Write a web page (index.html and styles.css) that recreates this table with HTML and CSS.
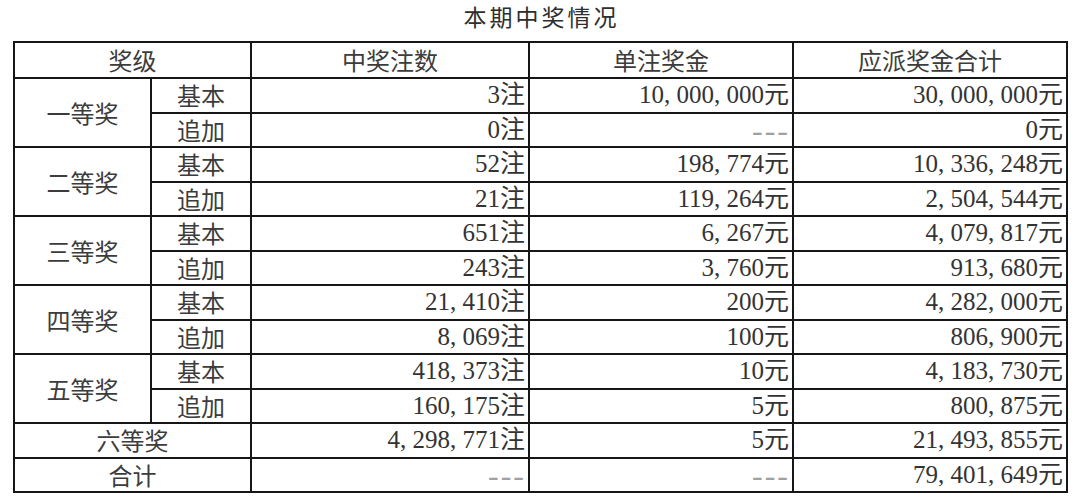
FILE: index.html
```html
<!DOCTYPE html>
<html lang="zh-CN">
<head>
<meta charset="utf-8">
<title>本期中奖情况</title>
<link rel="stylesheet" href="styles.css">
</head>
<body>
<div class="page">
  <h1 class="title">本期中奖情况</h1>
  <table class="prize">
    <colgroup>
      <col class="c-lvl"><col class="c-sub"><col class="c-cnt"><col class="c-each"><col class="c-total">
    </colgroup>
    <thead>
      <tr class="head"><th colspan="2">奖级</th><th>中奖注数</th><th>单注奖金</th><th>应派奖金合计</th></tr>
    </thead>
    <tbody>
      <tr><td rowspan="2" class="lvl">一等奖</td><td class="sub">基本</td><td class="n">3注</td><td class="n">10<span class="c">,</span>000<span class="c">,</span>000元</td><td class="n">30<span class="c">,</span>000<span class="c">,</span>000元</td></tr>
      <tr><td class="sub">追加</td><td class="n">0注</td><td class="n dash">---</td><td class="n">0元</td></tr>
      <tr><td rowspan="2" class="lvl">二等奖</td><td class="sub">基本</td><td class="n">52注</td><td class="n">198<span class="c">,</span>774元</td><td class="n">10<span class="c">,</span>336<span class="c">,</span>248元</td></tr>
      <tr><td class="sub">追加</td><td class="n">21注</td><td class="n">119<span class="c">,</span>264元</td><td class="n">2<span class="c">,</span>504<span class="c">,</span>544元</td></tr>
      <tr><td rowspan="2" class="lvl">三等奖</td><td class="sub">基本</td><td class="n">651注</td><td class="n">6<span class="c">,</span>267元</td><td class="n">4<span class="c">,</span>079<span class="c">,</span>817元</td></tr>
      <tr><td class="sub">追加</td><td class="n">243注</td><td class="n">3<span class="c">,</span>760元</td><td class="n">913<span class="c">,</span>680元</td></tr>
      <tr><td rowspan="2" class="lvl">四等奖</td><td class="sub">基本</td><td class="n">21<span class="c">,</span>410注</td><td class="n">200元</td><td class="n">4<span class="c">,</span>282<span class="c">,</span>000元</td></tr>
      <tr><td class="sub">追加</td><td class="n">8<span class="c">,</span>069注</td><td class="n">100元</td><td class="n">806<span class="c">,</span>900元</td></tr>
      <tr><td rowspan="2" class="lvl">五等奖</td><td class="sub">基本</td><td class="n">418<span class="c">,</span>373注</td><td class="n">10元</td><td class="n">4<span class="c">,</span>183<span class="c">,</span>730元</td></tr>
      <tr><td class="sub">追加</td><td class="n">160<span class="c">,</span>175注</td><td class="n">5元</td><td class="n">800<span class="c">,</span>875元</td></tr>
      <tr><td colspan="2" class="lvl">六等奖</td><td class="n">4<span class="c">,</span>298<span class="c">,</span>771注</td><td class="n">5元</td><td class="n">21<span class="c">,</span>493<span class="c">,</span>855元</td></tr>
      <tr><td colspan="2" class="lvl">合计</td><td class="n dash">---</td><td class="n dash">---</td><td class="n">79<span class="c">,</span>401<span class="c">,</span>649元</td></tr>
    </tbody>
  </table>
</div>
</body>
</html>
```
FILE: styles.css
```css
html, body {
  margin: 0;
  padding: 0;
  background: #ffffff;
}

body {
  font-family: "Noto Sans CJK SC", "Liberation Serif", sans-serif;
  color: #3c3c3c;
}

.page {
  width: 1080px;
  height: 501px;
  overflow: hidden;
  padding-top: 1px;
  box-sizing: border-box;
}

.title {
  margin: 0;
  height: 34px;
  line-height: 30px;
  text-align: center;
  font-size: 23px;
  font-weight: 400;
  letter-spacing: 3px;
  color: #2e2e2e;
  padding-left: 3px;
}

.prize {
  margin: 6px 0 0 13px;
  width: 1053px;
  border-collapse: collapse;
  table-layout: fixed;
  font-size: 24px;
}

.c-lvl { width: 137px; }
.c-sub { width: 100px; }
.c-cnt { width: 278px; }
.c-each { width: 264px; }
.c-total { width: 274px; }

.prize th,
.prize td {
  border: 2px solid #161616;
  padding: 0 3px;
  line-height: 28px;
  font-weight: 400;
  white-space: nowrap;
  overflow: hidden;
}

.prize tr { height: 34.5px; }
.prize tr.head { height: 36px; }

.prize th,
.lvl,
.sub {
  text-align: center;
}

.n {
  text-align: right;
  font-family: "Liberation Serif", "Noto Sans CJK SC", serif;
  font-size: 25px;
  color: #333333;
}

.c {
  display: inline-block;
  width: 0.5em;
  text-align: left;
}

.prize td.dash {
  color: #a0a0a0;
  font-size: 32px;
  letter-spacing: 2px;
  line-height: 30px;
  padding-right: 2px;
  overflow: visible;
}
```
